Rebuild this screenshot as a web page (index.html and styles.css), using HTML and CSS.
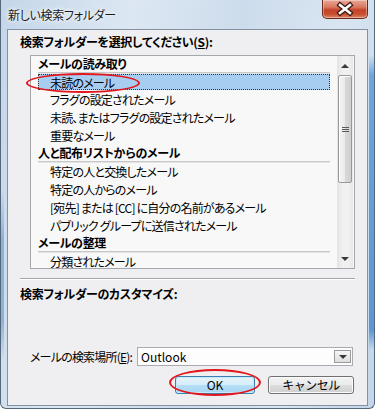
FILE: index.html
```html
<!DOCTYPE html>
<html>
<head>
<title>新しい検索フォルダー</title>
<link rel="stylesheet" href="styles.css">
</head>
<body>
<div class="window">
  <div class="titlebar">
    <span class="title">新しい検索フォルダー</span>
    <div class="close">
      <svg width="46" height="19" viewBox="0 0 46 19">
        <path d="M18 5 L28 13 M28 5 L18 13" stroke="#3b1611" stroke-width="5" stroke-linecap="square"/>
        <path d="M18 5 L28 13 M28 5 L18 13" stroke="#fff" stroke-width="2.6" stroke-linecap="square"/>
      </svg>
    </div>
  </div>
  <div class="client">
    <div class="label">検索フォルダーを選択してください(<u>S</u>):</div>
    <div class="listbox">
      <div class="list">
        <div class="group">メールの読み取り</div>
        <div class="item selected">未読のメール</div>
        <div class="item">フラグの設定されたメール</div>
        <div class="item">未読、またはフラグの設定されたメール</div>
        <div class="item">重要なメール</div>
        <div class="group">人と配布リストからのメール</div>
        <div class="item">特定の人と交換したメール</div>
        <div class="item">特定の人からのメール</div>
        <div class="item">[宛先] または [CC] に自分の名前があるメール</div>
        <div class="item">パブリック グループに送信されたメール</div>
        <div class="group">メールの整理</div>
        <div class="item">分類されたメール</div>
      </div>
      <div class="scrollbar">
        <div class="sbtn"><span class="arrow-up"></span></div>
        <div class="thumb"><span class="grip"></span></div>
        <div class="track"></div>
        <div class="sbtn"><span class="arrow-down"></span></div>
      </div>
    </div>
    <div class="sep"></div>
    <div class="label label2">検索フォルダーのカスタマイズ:</div>
    <div class="spacer"></div>
    <div class="field">
      <span class="field-label">メールの検索場所(<u>E</u>):</span>
      <div class="combo">
        <span class="combo-text">Outlook</span>
        <span class="drop"><span class="arrow-down"></span></span>
      </div>
    </div>
    <div class="buttons">
      <button class="btn default">OK</button>
      <button class="btn cancel">キャンセル</button>
    </div>
  </div>
  <div class="mark mark-unread"></div>
  <div class="mark mark-ok"></div>
</div>
</body>
</html>
```
FILE: styles.css
```css
* {box-sizing: border-box;}
body {margin: 0;font-family: "Noto Sans CJK JP", "Liberation Sans", sans-serif;font-size: 12px;color: #000;background: #fff;font-feature-settings: "palt";}
u {text-decoration: underline;text-underline-offset: 1px;}

.window {position: relative;width: 375px;height: 409px;padding: 0 6px 2px 6px;border: 1px solid #56687b;border-top: none;border-radius: 0 0 6px 6px;overflow: hidden;display: flex;flex-direction: column;
  background:
    linear-gradient(to bottom, transparent 55px, #6ea6dc 75px, #5b97d2 330px, transparent 350px) right 0 top 0 / 5px 100% no-repeat,
    linear-gradient(to bottom, transparent 190px, #8db1d7 240px, #8db1d7 320px, transparent 360px) left 0 top 0 / 3px 100% no-repeat,
    linear-gradient(100deg, #c4d6e9 0%, #dce7f2 30%, #cddcec 55%, #d9e5f1 78%, #c3d5e8 100%);}

.titlebar {height: 29px;display: flex;align-items: flex-start;flex-shrink: 0;}
.title {margin: 7px 0 0 1px;line-height: 16px;color: #1a1a1a;letter-spacing: -0.3px;text-shadow: 0 0 6px #fff, 0 0 3px #fff;}
.close {margin-left: auto;width: 46px;height: 19px;border: 1px solid #6a2a1e;border-top: none;border-radius: 0 0 5px 5px;
  background: linear-gradient(to bottom, #e9a797 0%, #d9775f 40%, #c4432a 55%, #c9502f 80%, #db8a6c 100%);
  box-shadow: inset 0 0 0 1px rgba(255,255,255,0.35);position: relative;}
.close svg {position: absolute;left: -1px;top: 0;}

.client {flex: 1;border: 1px solid #8292a4;background: #efeff1;padding: 4px 12px 11px 12px;display: flex;flex-direction: column;}
.label {line-height: 16px;font-weight: bold;letter-spacing: -0.3px;}

.listbox {margin: 5px 0 0 10px;height: 214px;border: 1px solid #a4a8ae;background: #f8f8f8;display: flex;}
.list {flex: 1;padding: 0 7px;overflow: hidden;}
.group {padding-top: 1px;line-height: 14px;padding-bottom: 1px;font-weight: bold;letter-spacing: -0.3px;border-bottom: 1px solid #c8c8c8;box-shadow: 0 1px 0 #e4e4e4;margin-bottom: 1px;white-space: nowrap;}
.item {height: 18px;line-height: 18px;padding-left: 12px;white-space: nowrap;letter-spacing: -0.8px;}
.item.selected {height: 16px;line-height: 16px;margin: 1px 0;padding-left: 11px;background: #a7cdf1;border: 1px dotted #3d3524;}

.scrollbar {width: 16px;margin-right: 1px;display: flex;flex-direction: column;background: linear-gradient(to right, #e4e4e4, #f1f1f1 40%, #f1f1f1 70%, #e8e8e8);}
.sbtn {height: 19px;display: flex;align-items: center;justify-content: center;}
.arrow-up {width: 0;height: 0;border-left: 4px solid transparent;border-right: 4px solid transparent;border-bottom: 4px solid #3a3a3a;}
.arrow-down {width: 0;height: 0;border-left: 4px solid transparent;border-right: 4px solid transparent;border-top: 4px solid #3a3a3a;}
.thumb {height: 108px;margin: 0 1px;border: 1px solid #989898;border-radius: 2px;display: flex;align-items: center;justify-content: center;
  background: linear-gradient(to right, #f4f4f4, #e9e9e9 50%, #d9d9d9 52%, #cfcfcf);box-shadow: inset 1px 1px 0 #fff;}
.grip {width: 7px;height: 5px;background: linear-gradient(#5a5a5a 0 1px, transparent 1px 2px, #5a5a5a 2px 3px, transparent 3px 4px, #5a5a5a 4px 5px);}
.track {flex: 1;}

.sep {margin-top: 9px;height: 2px;border-top: 1px solid #a6a6a6;border-bottom: 1px solid #fff;}
.label2 {margin-top: 6px;}
.spacer {flex: 1;}

.field {margin-left: 10px;height: 19px;display: flex;align-items: center;}
.field-label {flex: 1;line-height: 16px;white-space: nowrap;letter-spacing: -0.8px;}
.combo {width: 216px;height: 19px;flex-shrink: 0;margin-right: 2px;border: 1px solid #a9abb1;background: #fdfdfd;display: flex;align-items: center;padding-left: 3px;}
.combo-text {flex: 1;line-height: 16px;}
.drop {width: 17px;height: 13px;margin-right: 1px;border: 1px solid #9a9a9a;background: linear-gradient(#f6f6f6, #dedede);display: flex;align-items: center;justify-content: center;}

.buttons {margin-top: 10px;display: flex;justify-content: flex-end;gap: 13px;padding-right: 1px;}
.btn {height: 18px;padding: 0;font-family: inherit;font-size: 12px;font-weight: normal;line-height: 16px;color: #000;border-radius: 3px;cursor: pointer;}
.btn.default {width: 80px;border: 1px solid #3c7fb1;background: linear-gradient(#e5f4fc 0%, #d6eefb 50%, #b6def6 51%, #a9d6f3 100%);box-shadow: inset 0 0 0 1px #c8e8fb;}
.btn.cancel {width: 86px;border: 1px solid #707070;background: linear-gradient(#f2f2f2 0%, #ebebeb 50%, #dddddd 51%, #cfcfcf 100%);box-shadow: inset 0 0 0 1px #fbfbfb;letter-spacing: -0.5px;}

.mark {position: absolute;border: 2px solid #e3161c;border-radius: 50%;}
.mark-unread {left: 25px;top: 73px;width: 114px;height: 20px;}
.mark-ok {left: 168px;top: 369px;width: 92px;height: 27px;}
```
